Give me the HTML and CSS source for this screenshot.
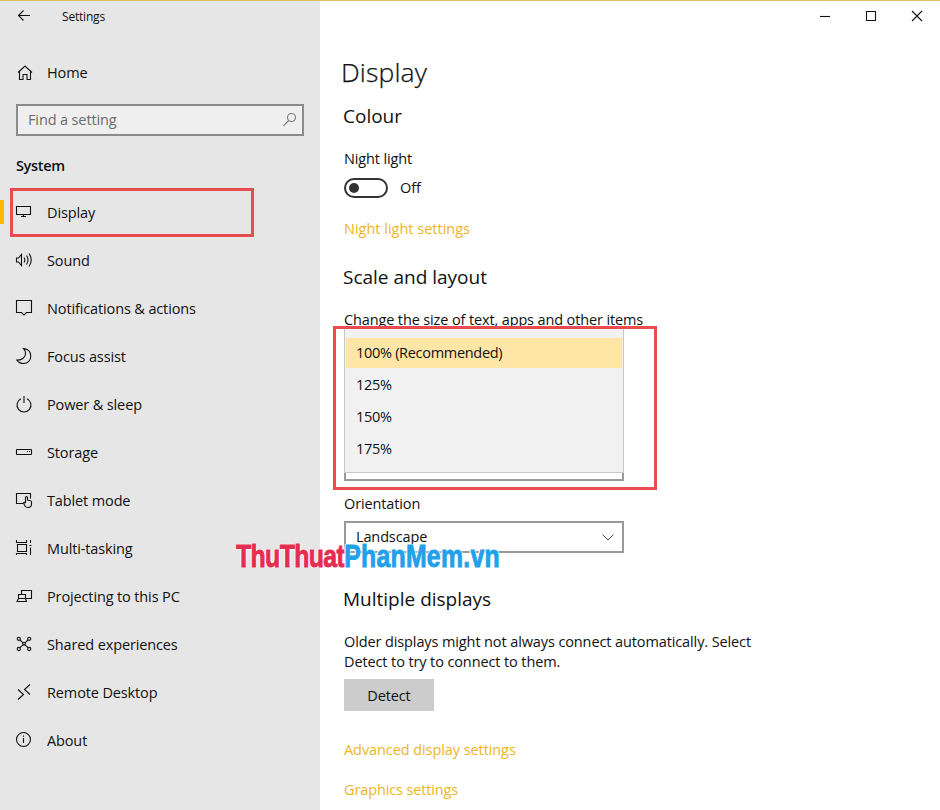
FILE: index.html
```html
<!DOCTYPE html>
<html lang="en">
<head>
<meta charset="utf-8">
<title>Settings</title>
<link rel="stylesheet" href="styles.css">
</head>
<body>
<div class="window">
  <aside class="sidebar">
    <header class="titlebar">
      <svg class="icon" viewBox="0 0 20 20"><path d="M16 9.500H4.500M9.500 4.500l-5 5 5 5"/></svg>
      <span class="app-name">Settings</span>
    </header>
    <a class="home"><svg class="icon" viewBox="0 0 20 20"><path d="M4 9.500l7-6.500 7 6.500M5.500 8.500v8h3.500v-5h4v5h3.500v-8"/></svg><span>Home</span></a>
    <div class="search"><span>Find a setting</span><svg class="icon" viewBox="0 0 20 20"><circle cx="12.500" cy="7.500" r="4"/><path d="M9.700 10.500L4.500 15.800"/></svg></div>
    <h3 class="group">System</h3>
    <nav class="nav">
      <a class="item active"><svg class="icon" viewBox="0 0 20 20"><path d="M2.500 4.500h14v8h-14zM9.500 12.500v2M7 14.500h5"/></svg><span>Display</span></a>
      <a class="item"><svg class="icon" viewBox="0 0 20 20"><path d="M2.500 8h2L7.500 4.500v11L4.500 12h-2zM10 7.500q1.700 2.500 0 5M12.500 5.500q3 4.500 0 9M15 3.500q4.500 6.500 0 13"/></svg><span>Sound</span></a>
      <a class="item"><svg class="icon" viewBox="0 0 20 20"><path d="M2.500 2.500h15v12h-5L10 17l-2.500-2.500h-5z"/></svg><span>Notifications &amp; actions</span></a>
      <a class="item"><svg class="icon" viewBox="0 0 20 20"><path d="M9.500 2.500c4.500.5 7.300 3.500 7.300 7.700 0 4.300-3 7.300-7.200 7.300-2.900 0-5.200-1.200-6.700-3.400 5.200.3 8.700-3 8.700-7 0-1.900-.7-3.200-2.100-4.600z"/></svg><span>Focus assist</span></a>
      <a class="item"><svg class="icon" viewBox="0 0 20 20"><path d="M7 4.700a7 7 0 1 0 6 0M10 2v7"/></svg><span>Power &amp; sleep</span></a>
      <a class="item"><svg class="icon" viewBox="0 0 20 20"><rect x="2.500" y="7.500" width="15" height="5" rx=".5"/><path d="M13 9.500h1M15 9.500h1"/></svg><span>Storage</span></a>
      <a class="item"><svg class="icon" viewBox="0 0 20 20"><path d="M9 13.500H2.500v-10h14v5M11.500 13V7.500q0-1 1-1t1 1V10l3 .7q1 .3 1 1.300v2q0 3.500-3.500 3.500-2 0-3-1.500L9.500 13q.5-1.200 2 0"/></svg><span>Tablet mode</span></a>
      <a class="item"><svg class="icon" viewBox="0 0 20 20"><path d="M2.500 2v2.500h10V2M3.500 6.500h9v7h-9zM2.500 17v-1.500h10V17M16.500 2v3M16.500 9.500v7.500M15.500 7.500h2"/></svg><span>Multi-tasking</span></a>
      <a class="item"><svg class="icon" viewBox="0 0 20 20"><path d="M7.500 8.500v-4h10v8H12M4.500 12.500v-4h7v4zM4.500 12.500l-1.500 3h9.500l-1-3"/></svg><span>Projecting to this PC</span></a>
      <a class="item"><svg class="icon" viewBox="0 0 20 20"><circle cx="4.800" cy="4.800" r="1.600"/><circle cx="15.200" cy="4.800" r="1.600"/><circle cx="4.800" cy="15" r="1.600"/><circle cx="15.200" cy="15" r="1.600"/><circle cx="10" cy="9.800" r="1.300"/><path d="M6 6l3 2.800M14 6l-3 2.800M6 13.700l3-2.800M14 13.700l-3-2.800"/></svg><span>Shared experiences</span></a>
      <a class="item"><svg class="icon" viewBox="0 0 20 20"><path d="M4 7.500l5.500 5L4 17.500M16 2.500l-5.500 5L16 12.500"/></svg><span>Remote Desktop</span></a>
      <a class="item"><svg class="icon" viewBox="0 0 20 20"><circle cx="9.500" cy="9.500" r="7"/><path d="M9.500 8v5M9.500 5.500v1.200"/></svg><span>About</span></a>
    </nav>
  </aside>
  <main class="content">
    <div class="controls">
      <svg class="icon" viewBox="0 0 20 20"><path d="M5 10.500h10"/></svg>
      <svg class="icon" viewBox="0 0 20 20"><path d="M5.500 5.500h9v9h-9z"/></svg>
      <svg class="icon" viewBox="0 0 20 20"><path d="M5 5l10 10M15 5L5 15"/></svg>
    </div>
    <h1>Display</h1>
    <h2 class="colour">Colour</h2>
    <p class="label night">Night light</p>
    <div class="toggle-row"><span class="toggle"></span><span>Off</span></div>
    <a class="link night-link">Night light settings</a>
    <h2 class="scale">Scale and layout</h2>
    <p class="label size">Change the size of text, apps and other items</p>
    <div class="picker">
      <div class="select behind"></div>
      <ul class="menu"><li class="chosen">100% (Recommended)</li><li>125%</li><li>150%</li><li>175%</li></ul>
      <div class="mark"></div>
    </div>
    <p class="label orientation">Orientation</p>
    <div class="select"><span>Landscape</span><svg class="icon" viewBox="0 0 20 20"><path d="M4.500 7.500l5.500 5.500 5.500-5.500"/></svg></div>
    <h2 class="multiple">Multiple displays</h2>
    <p class="text">Older displays might not always connect automatically. Select<br>Detect to try to connect to them.</p>
    <button class="button">Detect</button>
    <a class="link advanced">Advanced display settings</a>
    <a class="link graphics">Graphics settings</a>
  </main>
  <div class="watermark"><span class="red">ThuThuat</span><span class="blue">PhanMem.vn</span></div>
</div>
</body>
</html>
```
FILE: styles.css
```css
*, ::before, ::after { box-sizing: border-box; }
body { margin: 0; background: #fff; color: #111; font: 14.5px/20px "Open Sans", "Noto Sans", sans-serif; letter-spacing: -.13px; }
h1, h2, h3, p, ul { margin: 0; padding: 0; font-weight: 400; }
ul { list-style: none; }
.window { position: relative; display: flex; width: 940px; height: 810px; overflow: hidden; border-top: 1px solid #dfbd68; }
.icon { flex: none; display: block; width: 20px; height: 20px; fill: none; stroke: #111; stroke-width: 1.1; }

.sidebar { width: 320px; background: #e6e6e6; }
.titlebar { display: flex; align-items: center; gap: 28px; height: 30px; padding-left: 14px; }
.app-name { font-size: 12px; letter-spacing: -.2px; padding-top: 2px; }
.home { display: flex; align-items: center; gap: 13px; height: 40px; margin-top: 22px; padding-left: 14px; }
.search { display: flex; align-items: center; justify-content: space-between; width: 288px; height: 32px; margin: 11px 0 0 16px; padding: 0 3px 0 10px; border: 2px solid #8b8b8b; background: #efefef; color: #6b6b6b; }
.search .icon { stroke: #777; }
.group { height: 20px; margin: 20px 0 0 16px; font-size: 14.5px; font-weight: 600; letter-spacing: -.35px; }
.nav { margin-top: 12px; }
.item { position: relative; display: flex; align-items: center; gap: 13px; height: 48px; padding-left: 14px; }
.item span { padding-top: 2px; }
.active::before { content: ""; position: absolute; left: 0; top: 12px; width: 4px; height: 24px; background: #ffb900; }
.active::after { content: ""; position: absolute; left: 10px; top: 0; width: 244px; height: 49px; border: 3px solid #e94d50; }

.content { position: relative; width: 620px; padding-left: 24px; }
.controls { display: flex; justify-content: flex-end; gap: 26px; height: 30px; padding: 5px 13px 0 0; }
h1 { height: 40px; margin: 21px 0 0 -3px; font-size: 26.5px; line-height: 40px; font-weight: 300; letter-spacing: .15px; -webkit-text-stroke: .25px #111; }
h2 { height: 24px; margin-left: -1px; font-size: 19px; line-height: 24px; letter-spacing: 0; }
.colour { margin-top: 12px; }
.night { margin-top: 21px; }
.toggle-row { display: flex; align-items: center; gap: 12px; height: 20px; margin-top: 9px; }
.toggle { display: flex; align-items: center; width: 44px; height: 20px; padding-left: 3px; border: 2px solid #333; border-radius: 10px; }
.toggle::before { content: ""; width: 10px; height: 10px; border-radius: 50%; background: #333; }
.link { display: block; color: #f0b41e; }
.night-link { margin-top: 21px; letter-spacing: 0; }
.scale { margin-top: 26px; }
.size { margin-top: 21px; }
.picker { position: relative; display: flex; align-items: flex-end; height: 151px; }
.select { display: flex; align-items: center; justify-content: space-between; width: 280px; height: 32px; padding: 0 4px 0 10px; border: 2px solid #999; background: #fff; }
.select .icon { stroke: #555; stroke-width: 1; }
.menu { position: absolute; left: 0; top: -2px; width: 280px; height: 145px; padding: 9px 1px 0; border: 1px solid #c8c8c8; background: #f1f1f1; letter-spacing: -.3px; }
.menu li { height: 32px; padding-left: 10px; line-height: 32px; }
.menu .chosen { height: 30px; margin-bottom: 1px; line-height: 30px; background: #ffe6a6; }
.mark { position: absolute; left: -11px; top: -4px; width: 324px; height: 164px; border: 3px solid #e94d50; }
.orientation { margin: 13px 0 7px; }
.multiple { margin-top: 34px; }
.text { margin-top: 21px; letter-spacing: -.11px; }
.button { display: block; width: 90px; height: 32px; margin-top: 7px; padding: 2px 0 0; border: 0; background: #ccc; color: #111; font: inherit; letter-spacing: inherit; }
.advanced { margin-top: 29px; letter-spacing: -.08px; }
.graphics { margin-top: 20px; }

.watermark { position: absolute; left: 236px; top: 538px; white-space: nowrap; font: bold 31px/36px "Liberation Sans", sans-serif; transform: scaleX(.8); transform-origin: 0 0; text-shadow: 0 0 2px #fff, 1px 1px 1px #fff, -1px -1px 1px #fff, 1px -1px 1px #fff, -1px 1px 1px #fff; }
.red { color: #e62c50; letter-spacing: -.75px; -webkit-text-stroke: .9px #e62c50; }
.blue { color: #23a0ea; letter-spacing: .35px; -webkit-text-stroke: .9px #23a0ea; }
```
